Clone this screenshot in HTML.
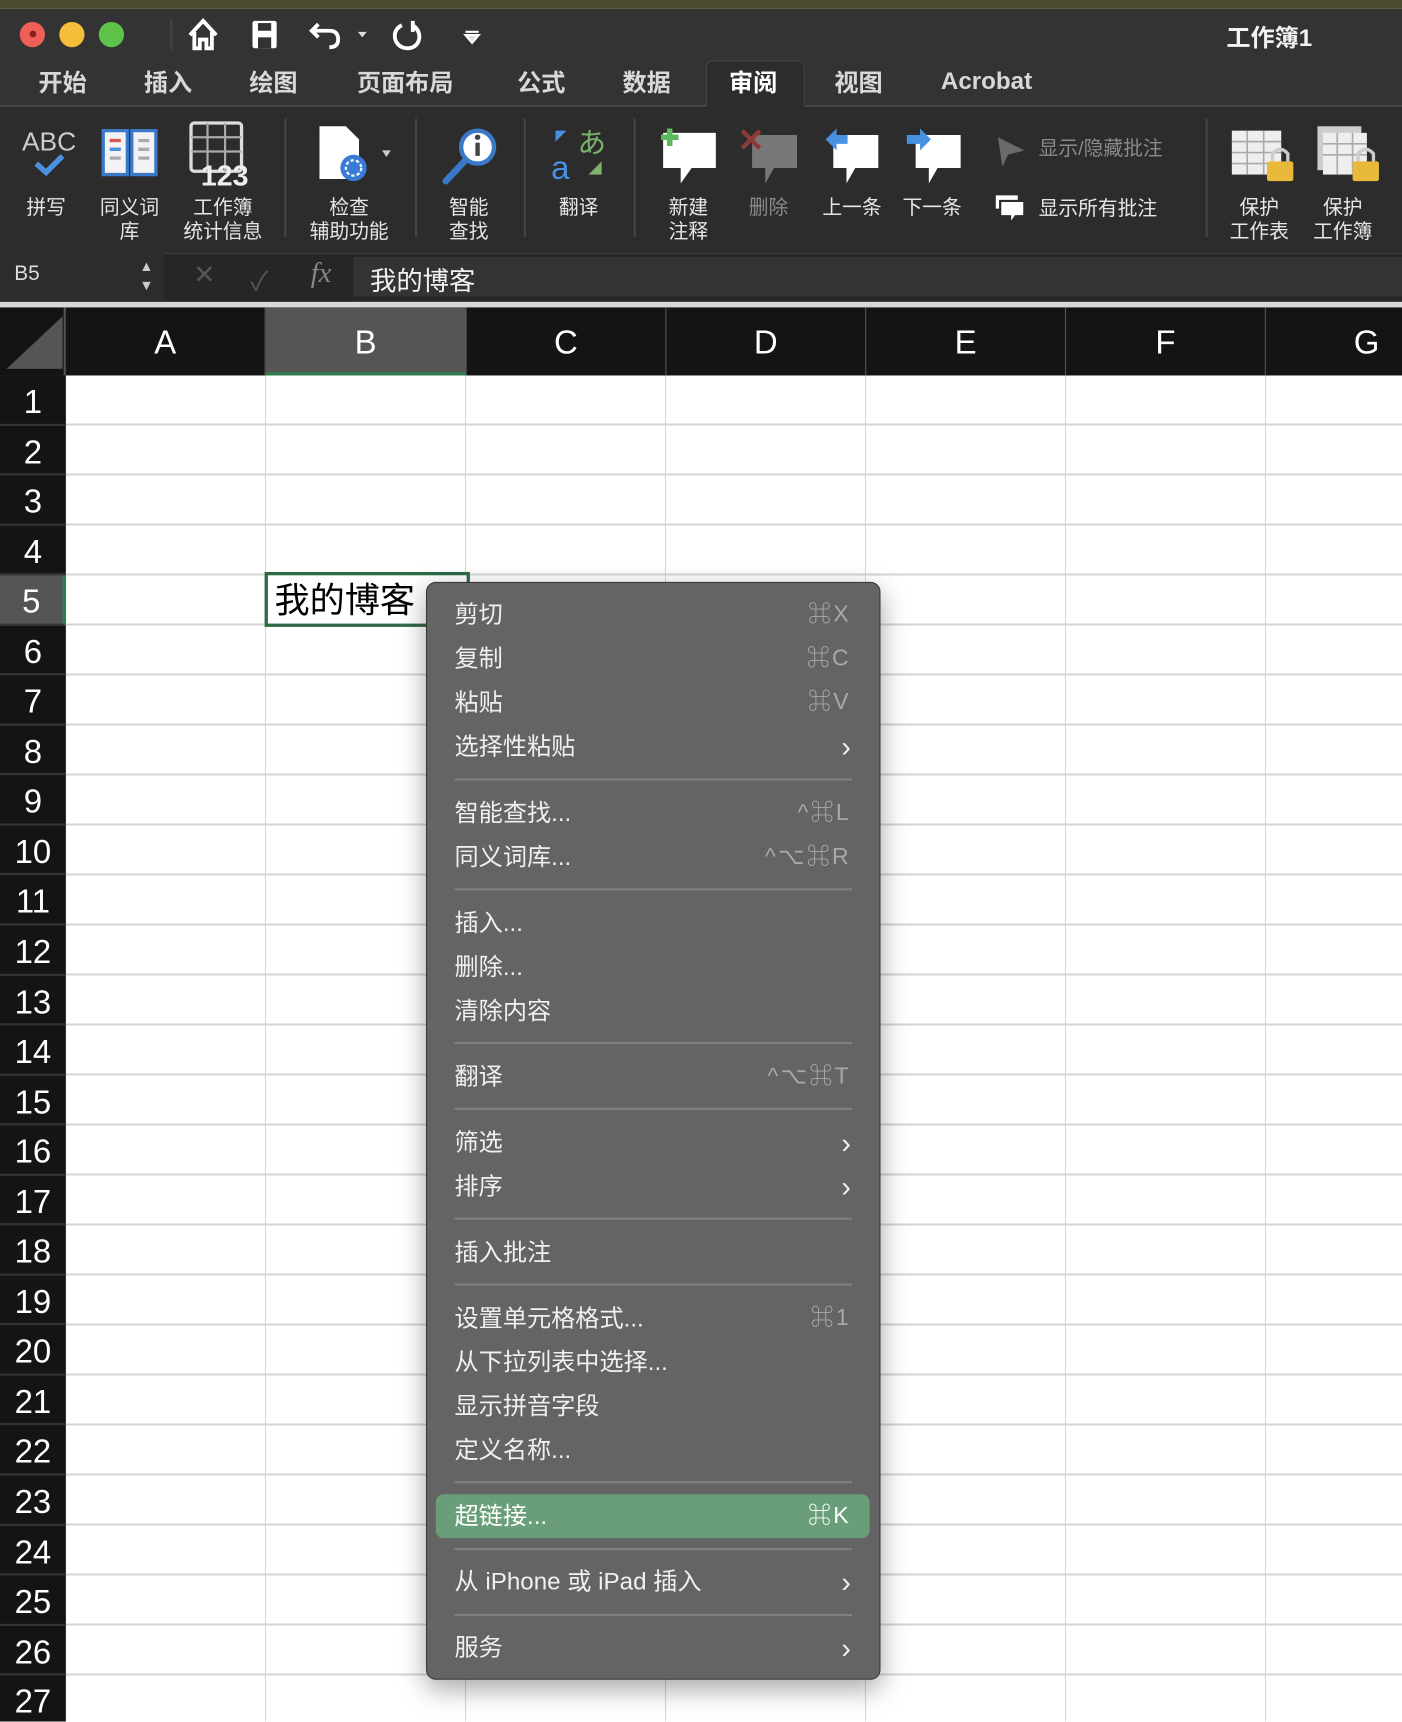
<!DOCTYPE html>
<html><head><meta charset="utf-8"><style>
*{margin:0;padding:0;box-sizing:border-box}
html,body{width:1402px;height:1722px;overflow:hidden;background:#fff}
#s{position:absolute;left:0;top:0;width:1277px;height:1568px;transform:scale(1.09789);transform-origin:0 0;font-family:"Liberation Sans","Noto Sans CJK SC",sans-serif;overflow:hidden}
.a{position:absolute}
.tab{position:absolute;top:58px;font-size:22px;color:#d8d8d8;font-weight:bold}
.lb{position:absolute;font-size:18px;color:#e6e6e6;text-align:center;line-height:22px;white-space:nowrap}
.vsep{position:absolute;top:108px;width:2px;height:108px;background:#444}
.ch{position:absolute;top:280px;height:62px;font-size:30px;color:#fff;text-align:center;line-height:66px;border-right:1px solid #555}
.rn{height:45.55px;font-size:30px;color:#fff;text-align:center;line-height:50px;border-bottom:2px solid #333}
.mi{position:absolute;left:414px;font-size:22px;color:#f0f0f0;line-height:30px}
.sc{position:absolute;right:502px;font-size:21px;color:#a8a8a8;line-height:30px;letter-spacing:2px}
.ar{position:absolute;right:502px;font-size:26px;color:#f0f0f0;line-height:30px}
.sp{position:absolute;left:414px;width:362px;height:2px;background:#808080}
</style></head><body><div id="s">
<div class="a" style="left:0;top:0;width:1277px;height:8px;background:#4a4a2c"></div>
<div class="a" style="left:0;top:8px;width:1277px;height:89px;background:#333"></div>
<div class="a" style="left:0;top:96px;width:1277px;height:1px;background:#555"></div>
<div class="a" style="left:18px;top:20px;width:23px;height:23px;border-radius:50%;background:#ed5f57"></div>
<div class="a" style="left:54px;top:20px;width:23px;height:23px;border-radius:50%;background:#f5bd3a"></div>
<div class="a" style="left:90px;top:20px;width:23px;height:23px;border-radius:50%;background:#5fc24a"></div>
<div class="a" style="left:27px;top:28px;width:6px;height:6px;border-radius:50%;background:#8a1f17"></div>
<div class="a" style="left:155px;top:18px;width:2px;height:28px;background:#444"></div>
<svg class="a" style="left:170px;top:15px" width="320" height="34" viewBox="0 0 320 34" fill="none" stroke="#fff" stroke-width="3.5">
<path d="M3 17 L15 4 L27 17 M7 14 V29 H12 V21 H18 V29 H23 V14" fill="none"/>
<rect x="60" y="4" width="22" height="25" rx="2" fill="#fff" stroke="none"/><rect x="65" y="6" width="12" height="7" fill="#333" stroke="none"/><rect x="65" y="19" width="12" height="10" fill="#333" stroke="none"/>
<path d="M120 7 L114 13 L120 19 M114 13 H130 Q138 13 138 21 Q138 28 130 28"/>
<path d="M156 14 L164 14 L160 19 Z" fill="#ddd" stroke="none"/>
<path d="M196 8 Q188 12 190 21 Q193 29 202 29 Q211 28 212 19 Q212 12 206 8 M206 4 V14" />
<path d="M254 14 H266 M254 17 L266 17 L260 24 Z" stroke-width="2" fill="#ddd"/>
</svg>
<div class="a" style="left:1117px;top:17px;font-size:22px;font-weight:bold;color:#f2f2f2">工作簿1</div>
<div class="tab" style="left:35px">开始</div>
<div class="tab" style="left:131px">插入</div>
<div class="tab" style="left:227px">绘图</div>
<div class="tab" style="left:325px">页面布局</div>
<div class="tab" style="left:471px">公式</div>
<div class="tab" style="left:567px">数据</div>
<div class="a" style="left:643px;top:55px;width:90px;height:43px;background:#2c2c2c;border:1px solid #444;border-bottom:none;border-radius:6px 6px 0 0"></div>
<div class="tab" style="left:664px;color:#fff">审阅</div>
<div class="tab" style="left:760px">视图</div>
<div class="tab" style="left:857px;top:61px;font-family:'Liberation Sans',sans-serif">Acrobat</div>
<div class="a" style="left:0;top:97px;width:1277px;height:134px;background:#2c2c2c"></div>
<div class="vsep" style="left:259px"></div><div class="vsep" style="left:378px"></div><div class="vsep" style="left:477px"></div><div class="vsep" style="left:577px"></div><div class="vsep" style="left:1098px"></div>
<svg class="a" style="left:0;top:97px" width="1277" height="134" viewBox="0 0 1277 134">
<text x="20" y="40" font-family="Liberation Sans" font-size="24" fill="#ccc">ABC</text>
<path d="M33 52 L42 60 L57 45" stroke="#4a90e2" stroke-width="5" fill="none"/>
<path d="M94 22 H116 V62 H94 Z M120 22 H142 V62 H120 Z" fill="#f2f2f2" stroke="#3a78c8" stroke-width="3"/>
<path d="M100 31 H110 M100 39 H110 M100 47 H110 M126 31 H136 M126 39 H136 M126 47 H136" stroke="#aaa" stroke-width="3"/>
<path d="M100 31 H110" stroke="#d9534f" stroke-width="3"/><path d="M100 39 H110" stroke="#4a90e2" stroke-width="3"/>
<rect x="174" y="15" width="46" height="44" rx="3" fill="none" stroke="#ddd" stroke-width="3"/>
<path d="M174 28 H220 M174 41 H220 M189 15 V59 M205 15 V59" stroke="#aaa" stroke-width="2"/>
<text x="183" y="72" font-family="Liberation Sans" font-weight="bold" font-size="26" fill="#eee">123</text>
<path d="M291 18 H315 L327 30 V66 H291 Z" fill="#fff"/>
<circle cx="322" cy="56" r="12" fill="#3a7bd5"/><circle cx="322" cy="56" r="7" fill="none" stroke="#fff" stroke-width="2" stroke-dasharray="3 2"/>
<path d="M348 40 L356 40 L352 46 Z" fill="#ccc"/>
<circle cx="435" cy="37" r="15" fill="#fff" stroke="#3a78c8" stroke-width="4"/><rect x="433" y="33" width="4" height="12" fill="#444"/><circle cx="435" cy="28" r="2.5" fill="#444"/>
<path d="M423 50 L406 68" stroke="#3a78c8" stroke-width="6" stroke-linecap="round"/>
<text x="502" y="66" font-family="Liberation Sans" font-size="30" fill="#4a90e2">a</text>
<text x="526" y="42" font-family="Noto Sans CJK JP" font-size="26" fill="#7cb36a">あ</text>
<path d="M506 22 L516 22 L506 32 Z" fill="#4a90e2"/><path d="M548 50 L548 62 L536 62 Z" fill="#7cb36a"/>
<path d="M604 24 H652 V56 H630 L620 70 V56 H604 Z" fill="#fff"/><path d="M610 20 V36 M602 28 H618" stroke="#5cb85c" stroke-width="5"/>
<path d="M685 26 H726 V56 H705 L697 70 V56 H685 Z" fill="#777"/><path d="M676 22 L692 38 M692 22 L676 38" stroke="#8b3a3a" stroke-width="4"/>
<path d="M759 26 H800 V56 H779 L771 70 V56 H759 Z" fill="#fff"/><path d="M752 30 L762 20 V26 H772 V34 H762 V40 Z" fill="#4a90e2"/>
<path d="M834 26 H875 V56 H854 L846 70 V56 H834 Z" fill="#fff"/><path d="M848 30 L838 20 V26 H826 V34 H838 V40 Z" fill="#4a90e2"/>
<path d="M909 28 L933 40 L918 44 L913 55 Z" fill="#6a6a6a"/>
<path d="M906 80 H928 V94 H920 L915 102 V94 H906 Z" fill="#fff" stroke="#2c2c2c" stroke-width="2"/><path d="M911 86 H933 V100 H925 L920 107 V100 H911 Z" fill="#fff" stroke="#2c2c2c" stroke-width="2"/>
<rect x="1122" y="22" width="45" height="40" fill="#eee"/><path d="M1122 32 H1167 M1122 42 H1167 M1122 52 H1167 M1136 22 V62 M1151 22 V62" stroke="#aaa" stroke-width="1.5"/>
<rect x="1154" y="50" width="24" height="18" rx="2" fill="#e8b93a"/><path d="M1159 50 V43 Q1166 35 1173 43 V50" stroke="#ccc" stroke-width="3" fill="none"/>
<rect x="1200" y="18" width="40" height="40" fill="#ccc"/><rect x="1205" y="24" width="40" height="38" fill="#eee"/><path d="M1205 34 H1245 M1205 44 H1245 M1218 24 V62 M1232 24 V62" stroke="#aaa" stroke-width="1.5"/>
<rect x="1232" y="50" width="24" height="18" rx="2" fill="#e8b93a"/><path d="M1237 50 V43 Q1244 35 1251 43 V50" stroke="#ccc" stroke-width="3" fill="none"/>
</svg>
<div class="lb" style="left:20px;top:178px;width:44px">拼写</div>
<div class="lb" style="left:88px;top:178px;width:60px">同义词<br>库</div>
<div class="lb" style="left:163px;top:178px;width:80px">工作簿<br>统计信息</div>
<div class="lb" style="left:277px;top:178px;width:82px">检查<br>辅助功能</div>
<div class="lb" style="left:405px;top:178px;width:44px">智能<br>查找</div>
<div class="lb" style="left:505px;top:178px;width:44px">翻译</div>
<div class="lb" style="left:605px;top:178px;width:44px">新建<br>注释</div>
<div class="lb" style="left:678px;top:178px;width:44px;color:#8a8a8a">删除</div>
<div class="lb" style="left:746px;top:178px;width:60px">上一条</div>
<div class="lb" style="left:819px;top:178px;width:60px">下一条</div>
<div class="lb" style="left:946px;top:124px;color:#8a8a8a">显示/隐藏批注</div>
<div class="lb" style="left:946px;top:179px">显示所有批注</div>
<div class="lb" style="left:1116px;top:178px;width:62px">保护<br>工作表</div>
<div class="lb" style="left:1192px;top:178px;width:62px">保护<br>工作簿</div>
<div class="a" style="left:0;top:231px;width:1277px;height:44px;background:#262626"></div>
<div class="a" style="left:0;top:231px;width:150px;height:44px;background:#2c2c2c"></div>
<div class="a" style="left:13px;top:239px;font-size:19px;color:#ddd">B5</div>
<div class="a" style="left:127px;top:234px;font-size:13px;color:#ccc;line-height:17px">▲<br>▼</div>
<div class="a" style="left:176px;top:236px;font-size:24px;color:#555">✕</div>
<div class="a" style="left:228px;top:236px;font-size:24px;color:#555">✓</div>
<div class="a" style="left:283px;top:234px;font-size:26px;color:#888;font-style:italic;font-family:'Liberation Serif',serif">fx</div>
<div class="a" style="left:322px;top:234px;width:955px;height:36px;background:#333"></div>
<div class="a" style="left:337px;top:236px;font-size:24px;color:#f2f2f2">我的博客</div>
<div class="a" style="left:0;top:275px;width:1277px;height:5px;background:#d8d8d8"></div>
<div class="a" style="left:60px;top:342px;width:1217px;height:1226px;background:#fff;
background-image:repeating-linear-gradient(to bottom,transparent 0,transparent 43.55px,#d4d4d4 43.55px,#d4d4d4 45.55px),
repeating-linear-gradient(to right,transparent 0,transparent 181.2px,#d4d4d4 181.2px,#d4d4d4 182.2px)"></div>
<div class="a" style="left:0;top:280px;width:1277px;height:62px;background:#141414"></div>
<svg class="a" style="left:0;top:280px" width="60" height="62"><path d="M6 56 L57 8 V56 Z" fill="#555"/><rect x="58" y="0" width="2" height="62" fill="#555"/></svg>
<div class="ch" style="left:60px;width:182px">A</div>
<div class="ch" style="left:242px;width:183px;background:#555;border-bottom:3px solid #2e7d4f">B</div>
<div class="ch" style="left:425px;width:182px">C</div>
<div class="ch" style="left:607px;width:182px">D</div>
<div class="ch" style="left:789px;width:182px">E</div>
<div class="ch" style="left:971px;width:182px">F</div>
<div class="ch" style="left:1153px;width:182px;text-align:left;padding-left:80px">G</div>
<div class="a" style="left:0;top:342px;width:60px;height:1226px;background:#141414">
<div class="rn">1</div><div class="rn">2</div><div class="rn">3</div><div class="rn">4</div><div class="rn" style="background:#555;border-right:3px solid #2e7d4f">5</div><div class="rn">6</div><div class="rn">7</div><div class="rn">8</div><div class="rn">9</div><div class="rn">10</div><div class="rn">11</div><div class="rn">12</div><div class="rn">13</div><div class="rn">14</div><div class="rn">15</div><div class="rn">16</div><div class="rn">17</div><div class="rn">18</div><div class="rn">19</div><div class="rn">20</div><div class="rn">21</div><div class="rn">22</div><div class="rn">23</div><div class="rn">24</div><div class="rn">25</div><div class="rn">26</div><div class="rn">27</div>
</div>
<div class="a" style="left:241px;top:521px;width:187px;height:50px;border:3px solid #2e6b45;background:#fff"></div>
<div class="a" style="left:250px;top:527px;font-size:32px;color:#000;line-height:40px">我的博客</div>
<div class="a" style="left:388px;top:530px;width:414px;height:1000px;background:#646464;border:1px solid #3a3a3a;border-radius:9px;box-shadow:0 8px 24px rgba(0,0,0,.35)"></div>
<div class="a" style="left:397px;top:1361px;width:395px;height:40px;background:#6a9e78;border-radius:7px"></div>
<div class="mi" style="top:545px">剪切</div><div class="sc" style="top:545px">⌘X</div>
<div class="mi" style="top:585px">复制</div><div class="sc" style="top:585px">⌘C</div>
<div class="mi" style="top:625px">粘贴</div><div class="sc" style="top:625px">⌘V</div>
<div class="mi" style="top:665px">选择性粘贴</div><div class="ar" style="top:665px">›</div>
<div class="sp" style="top:709px"></div>
<div class="mi" style="top:726px">智能查找...</div><div class="sc" style="top:726px">^⌘L</div>
<div class="mi" style="top:766px">同义词库...</div><div class="sc" style="top:766px">^⌥⌘R</div>
<div class="sp" style="top:809px"></div>
<div class="mi" style="top:826px">插入...</div>
<div class="mi" style="top:866px">删除...</div>
<div class="mi" style="top:906px">清除内容</div>
<div class="sp" style="top:949px"></div>
<div class="mi" style="top:966px">翻译</div><div class="sc" style="top:966px">^⌥⌘T</div>
<div class="sp" style="top:1009px"></div>
<div class="mi" style="top:1026px">筛选</div><div class="ar" style="top:1026px">›</div>
<div class="mi" style="top:1066px">排序</div><div class="ar" style="top:1066px">›</div>
<div class="sp" style="top:1109px"></div>
<div class="mi" style="top:1126px">插入批注</div>
<div class="sp" style="top:1169px"></div>
<div class="mi" style="top:1186px">设置单元格格式...</div><div class="sc" style="top:1186px">⌘1</div>
<div class="mi" style="top:1226px">从下拉列表中选择...</div>
<div class="mi" style="top:1266px">显示拼音字段</div>
<div class="mi" style="top:1306px">定义名称...</div>
<div class="sp" style="top:1349px"></div>
<div class="mi" style="top:1366px;color:#fff">超链接...</div><div class="sc" style="top:1366px;color:#fff">⌘K</div>
<div class="sp" style="top:1410px"></div>
<div class="mi" style="top:1426px">从 iPhone 或 iPad 插入</div><div class="ar" style="top:1426px">›</div>
<div class="sp" style="top:1470px"></div>
<div class="mi" style="top:1486px">服务</div><div class="ar" style="top:1486px">›</div>
</div></body></html>
